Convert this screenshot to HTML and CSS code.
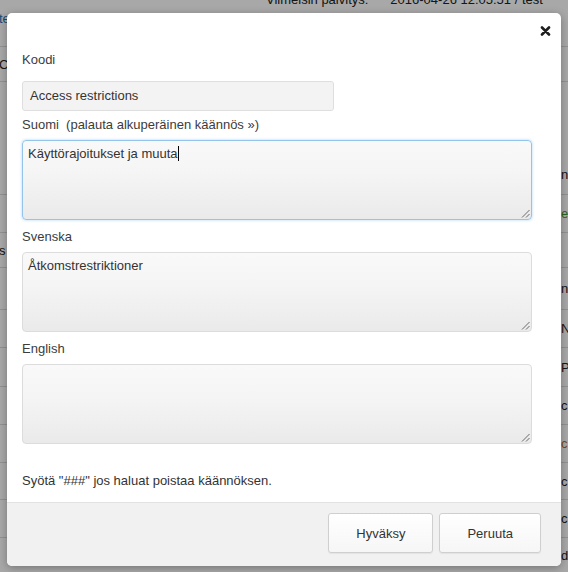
FILE: index.html
```html
<!DOCTYPE html>
<html lang="fi">
<head>
<meta charset="utf-8">
<title>Käännös</title>
<link rel="stylesheet" href="styles.css">
</head>
<body>
<div class="page">
  <div class="top">
    <div class="upd"><span class="upd-label">Viimeisin päivitys:</span><span class="upd-val">2016-04-26 12:05:51 / test</span></div>
    <div class="toplink"><span class="link">te</span></div>
  </div>
  <div class="row h35"><span class="l">C</span><span class="r"></span></div>
  <div class="row h113 low"><span class="l"></span><span class="r">n</span></div>
  <div class="row h38"><span class="l"></span><span class="r green">e</span></div>
  <div class="row h35"><span class="l">s</span><span class="r"></span></div>
  <div class="row h42"><span class="l"></span><span class="r">n</span></div>
  <div class="row h38"><span class="l"></span><span class="r">N</span></div>
  <div class="row h39"><span class="l"></span><span class="r">P</span></div>
  <div class="row h38"><span class="l"></span><span class="r">c</span></div>
  <div class="row h38"><span class="l"></span><span class="r orange">c</span></div>
  <div class="row h37"><span class="l"></span><span class="r">c</span></div>
  <div class="row h38"><span class="l"></span><span class="r">c</span></div>
  <div class="row h34 last"><span class="l"></span><span class="r">d</span></div>
</div>
<div class="overlay"></div>
<div class="modal">
  <div class="modal-head">
    <button class="close" type="button" aria-label="Sulje">
      <svg width="11" height="10" viewBox="0 0 11 10"><path d="M2 1.5 L9 8.5 M9 1.5 L2 8.5" stroke="#1e1e1e" stroke-width="2.6" stroke-linecap="round" fill="none"/></svg>
    </button>
  </div>
  <div class="modal-body">
    <div class="lbl lbl-code">Koodi</div>
    <div class="input">Access restrictions</div>
    <div class="lbl">Suomi&nbsp; (palauta alkuperäinen käännös »)</div>
    <div class="ta focus">Käyttörajoitukset ja muuta<span class="caret"></span>
      <svg class="grip" width="9" height="9" viewBox="0 0 9 9"><path d="M1 8.5 L8.5 1 M5 8.5 L8.5 5" stroke="#6a6a6a" stroke-width="1" fill="none"/></svg>
    </div>
    <div class="lbl">Svenska</div>
    <div class="ta">Åtkomstrestriktioner
      <svg class="grip" width="9" height="9" viewBox="0 0 9 9"><path d="M1 8.5 L8.5 1 M5 8.5 L8.5 5" stroke="#6a6a6a" stroke-width="1" fill="none"/></svg>
    </div>
    <div class="lbl">English</div>
    <div class="ta">
      <svg class="grip" width="9" height="9" viewBox="0 0 9 9"><path d="M1 8.5 L8.5 1 M5 8.5 L8.5 5" stroke="#6a6a6a" stroke-width="1" fill="none"/></svg>
    </div>
    <p class="note">Syötä "###" jos haluat poistaa käännöksen.</p>
  </div>
  <div class="modal-foot">
    <button class="btn" type="button">Hyväksy</button>
    <button class="btn" type="button">Peruuta</button>
  </div>
</div>
</body>
</html>
```
FILE: styles.css
```css
html, body {
  margin: 0;
  padding: 0;
}
body {
  width: 568px;
  height: 572px;
  overflow: hidden;
  position: relative;
  background: #fff;
  font-family: "Liberation Sans", Arial, sans-serif;
  font-size: 13px;
  color: #333;
}

/* background page */
.page {
  display: flex;
  flex-direction: column;
}
.top {
  height: 47px;
  box-sizing: border-box;
  border-bottom: 1px solid #dcdcdc;
  display: flex;
  flex-direction: column;
}
.upd {
  margin-top: -9px;
  padding-left: 266px;
  line-height: 18px;
  white-space: nowrap;
  color: #222;
}
.upd-label { margin-right: 22px; }
.toplink {
  margin-top: 1px;
  margin-left: -1px;
  line-height: 18px;
}
.link { color: #2a6fb4; }

.row {
  display: grid;
  grid-template-columns: 560px 1fr;
  align-items: center;
  box-sizing: border-box;
  border-bottom: 1px solid #dcdcdc;
  white-space: nowrap;
  color: #222;
}
.row.low { align-items: end; padding-bottom: 12px; }
.row .l { margin-left: -1px; }
.row .r { padding-left: 1px; }
.green { color: #3f9a2d; }
.orange { color: #b5701b; }
.h34 { height: 34px; }
.h35 { height: 35px; }
.h37 { height: 37px; }
.h38 { height: 38px; }
.h39 { height: 39px; }
.h42 { height: 42px; }
.h113 { height: 113px; }
.last { border-bottom: 0; }

.overlay {
  position: absolute;
  inset: 0;
  background: rgba(0, 0, 0, 0.34);
}

/* modal */
.modal {
  position: absolute;
  left: 7px;
  top: 13px;
  width: 554px;
  height: 553px;
  background: #fff;
  border-radius: 5px;
  box-shadow: 0 2px 8px rgba(0, 0, 0, 0.3);
  display: flex;
  flex-direction: column;
  overflow: hidden;
}
.modal-head {
  height: 34px;
  display: flex;
  justify-content: flex-end;
  align-items: center;
  padding-right: 10px;
}
.close {
  width: 11px;
  height: 10px;
  padding: 0;
  border: 0;
  background: none;
  display: block;
  margin-top: 1px;
}
.close svg { display: block; }

.modal-body {
  flex: 1;
  padding: 3px 29px 0 15px;
}
.lbl {
  line-height: 20px;
  color: #3c3c3c;
  margin-bottom: 5px;
  white-space: pre;
}
.lbl-code { margin-bottom: 11px; }
.input {
  width: 312px;
  height: 30px;
  box-sizing: border-box;
  border: 1px solid #dedede;
  border-radius: 3px;
  background: #f3f3f3;
  padding: 0 7px;
  line-height: 28px;
  color: #333;
  margin-bottom: 4px;
}
.ta {
  position: relative;
  height: 80px;
  box-sizing: border-box;
  border: 1px solid #dcdcdc;
  border-radius: 4px;
  background: linear-gradient(#f9f9f9 0%, #f5f5f5 40%, #eaeaea 100%);
  padding: 5px 5px;
  line-height: 16px;
  color: #333;
  margin-bottom: 7px;
}
.ta.focus {
  border-color: #95c4ea;
  box-shadow: 0 0 3px rgba(102, 175, 233, 0.55);
}
.caret {
  display: inline-block;
  width: 1px;
  height: 15px;
  background: #000;
  vertical-align: -3px;
}
.grip {
  position: absolute;
  right: 1px;
  bottom: 1px;
  display: block;
}
.note {
  margin: 27px 0 0;
  line-height: 20px;
  color: #333;
}

.modal-foot {
  border-top: 1px solid #e2e2e2;
  background: #f1f1f1;
  padding: 10px 20px 13px 0;
  display: flex;
  justify-content: flex-end;
  gap: 6px;
}
.btn {
  height: 40px;
  padding: 0 27px;
  border: 1px solid #cfcfcf;
  border-radius: 3px;
  background: linear-gradient(#ffffff, #f6f6f6);
  box-shadow: 0 1px 1px rgba(0, 0, 0, 0.06);
  font-family: "Liberation Sans", Arial, sans-serif;
  font-size: 13px;
  color: #333;
}
```
